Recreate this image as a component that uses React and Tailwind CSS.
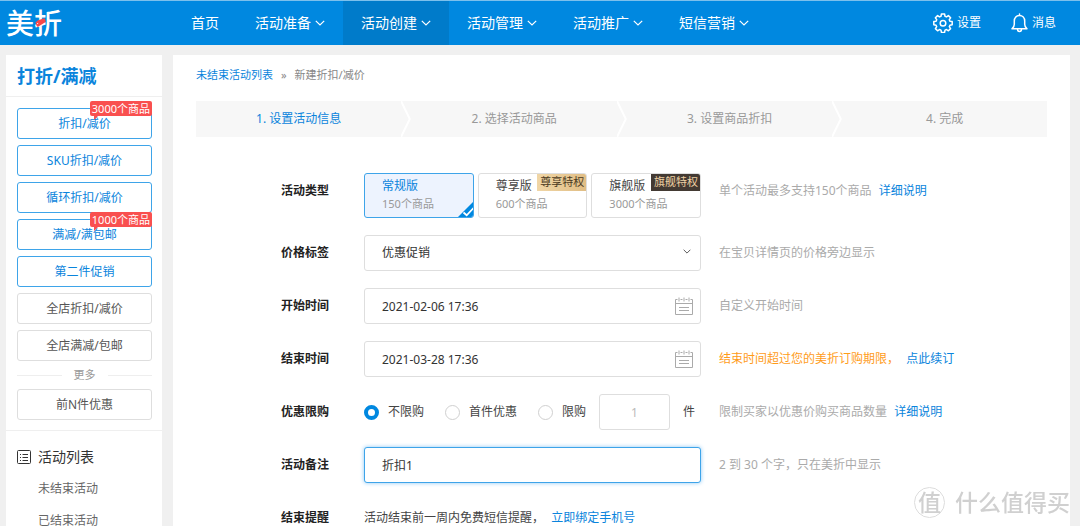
import { useState } from "react";
import clsx from "clsx";

const NAV = [
  { label: "首页" },
  { label: "活动准备", menu: true },
  { label: "活动创建", menu: true, active: true },
  { label: "活动管理", menu: true },
  { label: "活动推广", menu: true },
  { label: "短信营销", menu: true },
];

const TOOLS = [
  { label: "折扣/减价", primary: true, badge: "3000个商品" },
  { label: "SKU折扣/减价", primary: true },
  { label: "循环折扣/减价", primary: true },
  { label: "满减/满包邮", primary: true, badge: "1000个商品" },
  { label: "第二件促销", primary: true },
  { label: "全店折扣/减价" },
  { label: "全店满减/包邮" },
];

const STEPS = ["1. 设置活动信息", "2. 选择活动商品", "3. 设置商品折扣", "4. 完成"];

const EDITIONS = [
  { id: "basic", name: "常规版", quota: "150个商品" },
  { id: "premium", name: "尊享版", quota: "600个商品", tag: "尊享特权", tagClass: "bg-linear-to-r from-[#f0d6a6] to-[#e0bd84] text-[#4a3a22]" },
  { id: "flagship", name: "旗舰版", quota: "3000个商品", tag: "旗舰特权", tagClass: "bg-[#433a33] text-[#f0d2a4]" },
];

const LIMITS = [
  { id: "none", name: "不限购" },
  { id: "first", name: "首件优惠" },
  { id: "custom", name: "限购" },
];

const FIELD = "w-full h-9 rounded-[3px] border border-[#dedede] bg-white pl-[17px] text-[#333] outline-none";

function Chevron({ className }) {
  return (
    <svg className={className} viewBox="0 0 10 6" fill="none" stroke="currentColor" strokeWidth="1.2">
      <path d="M0.8 0.8L5 5l4.200-4.200" />
    </svg>
  );
}

function GearIcon() {
  return (
    <svg className="size-5" viewBox="0 0 20 20" fill="none" stroke="currentColor" strokeWidth="1.5" strokeLinejoin="round">
      <path d="M8.400 1h3.200l.4 2.300 1.500.6 1.900-1.300 2.200 2.200-1.300 1.900.6 1.500 2.300.4v3.200l-2.300.4-.6 1.500 1.300 1.900-2.200 2.200-1.900-1.300-1.500.6-.4 2.300H8.400L8 17.100l-1.500-.6-1.900 1.300-2.200-2.200 1.300-1.900-.6-1.500L.8 11.800V8.600l2.300-.4.6-1.500-1.300-1.900 2.200-2.200 1.900 1.300L8 3.300z" />
      <circle cx="10" cy="10.200" r="2.800" />
    </svg>
  );
}

function BellIcon() {
  return (
    <svg className="w-[17px] h-5" viewBox="0 0 17 20" fill="none" stroke="currentColor" strokeWidth="1.5" strokeLinejoin="round" strokeLinecap="round">
      <path d="M8.500 1v1.500M1 15.800h15c-1.600-1.300-2.300-2.600-2.300-4.600V8c0-3.200-2.200-5.500-5.200-5.500S3.300 4.800 3.300 8v3.200c0 2-.7 3.300-2.300 4.600z" />
      <path d="M6.500 16.200a2 2.200 0 0 0 4 0" />
    </svg>
  );
}

function CalendarIcon() {
  return (
    <svg className="size-[18px]" viewBox="0 0 18 18" fill="none" stroke="currentColor">
      <path d="M2.500 2.500h-2v15h17v-15h-2M5.500 2.500h2M10.500 2.500h2M.5 6.500h17M4 10.500h10M4 13.500h10" />
      <path d="M4 .5v4M9 .5v4M14 .5v4" />
    </svg>
  );
}

function ListIcon() {
  return (
    <svg className="size-[14px]" viewBox="0 0 14 14" fill="none" stroke="currentColor">
      <rect x=".5" y=".5" width="13" height="13" rx="1" />
      <path d="M3 4.500h1M3 7.500h1M3 10.500h1M5.500 4.500H11M5.500 7.500H11M5.500 10.500H11" />
    </svg>
  );
}

function Link({ children, className }) {
  return (
    <a href="#" className={clsx("text-[#0a84dc]", className)}>
      {children}
    </a>
  );
}

function Header() {
  return (
    <header className="flex h-[45px] items-stretch border-t border-[#7cc0ec] bg-[#0088e0] text-white">
      <a href="#" className="relative flex w-[173px] items-center pl-[6px] text-[28px] leading-none font-medium">
        美折
        <svg className="absolute top-[17px] left-[35px] h-[10px] w-[11px]" viewBox="0 0 11 10">
          <path d="M.5 4.500L3 2.200 8.500.4a1.300 1.300 0 0 1 1.600.8l.5 1.700a1.300 1.300 0 0 1-.8 1.600L3.500 8.600a1.400 1.400 0 0 1-1.900-.8z" fill="#f9484a" />
          <circle cx="2.600" cy="5.500" r=".6" fill="#fff" />
        </svg>
      </a>
      <nav className="flex text-sm">
        {NAV.map((item) => (
          <a key={item.label} href="#" className={clsx("flex items-center gap-1 px-[18px]", item.active && "bg-[#007bca]")}>
            {item.label}
            {item.menu && <Chevron className="h-[6px] w-[10px]" />}
          </a>
        ))}
      </nav>
      <div className="ml-auto flex items-center gap-[30px] pr-6 text-xs">
        <a href="#" className="flex items-center gap-1">
          <GearIcon />
          设置
        </a>
        <a href="#" className="flex items-center gap-1">
          <BellIcon />
          消息
        </a>
      </div>
    </header>
  );
}

function ToolButton({ tool }) {
  return (
    <button
      type="button"
      className={clsx(
        "relative h-[31px] w-full rounded-[3px] border bg-white",
        tool.primary ? "border-[#3ea4e9] text-[#0a84dc]" : "border-[#dedede] text-[#555]"
      )}
    >
      {tool.label}
      {tool.badge && (
        <span className="absolute -top-2 -right-px h-[15px] rounded-[2px] bg-[#f9504f] px-[2px] text-[11px] leading-[15px] text-white">
          {tool.badge}
          <svg className="absolute top-full left-1 h-1 w-1" viewBox="0 0 4 4">
            <path d="M0 0h4L0 4z" fill="#f9504f" />
          </svg>
        </span>
      )}
    </button>
  );
}

function Sidebar() {
  return (
    <aside className="w-[156px] shrink-0 bg-white">
      <h2 className="border-b border-[#efefef] px-[11px] pt-[7px] pb-[6px] text-lg leading-7 font-bold text-[#0a84dc]">打折/满减</h2>
      <div className="flex flex-col gap-[6px] border-b border-[#efefef] pt-[11px] pr-[10px] pb-[10px] pl-[11px]">
        {TOOLS.map((tool) => (
          <ToolButton key={tool.label} tool={tool} />
        ))}
        <div className="flex h-4 items-center gap-3 text-[11px] text-[#999]">
          <span className="h-px flex-1 bg-[#eee]" />
          更多
          <span className="h-px flex-1 bg-[#eee]" />
        </div>
        <ToolButton tool={{ label: "前N件优惠" }} />
      </div>
      <div className="px-[11px] pt-[14px] text-[#666]">
        <h3 className="flex items-center gap-[7px] text-sm leading-6 text-[#333]">
          <ListIcon />
          活动列表
        </h3>
        <ul className="pt-1 pl-[21px] leading-8">
          <li>
            <a href="#">未结束活动</a>
          </li>
          <li>
            <a href="#">已结束活动</a>
          </li>
        </ul>
      </div>
    </aside>
  );
}

function Steps() {
  return (
    <ol className="flex h-9 bg-[#f7f7f7] text-[#999]">
      {STEPS.map((step, i) => (
        <li key={step} className={clsx("flex items-stretch", i < STEPS.length - 1 ? "flex-1" : "flex-[0.95]")}>
          <span className={clsx("flex flex-1 items-center justify-center", i === 0 && "text-[#0a84dc]")}>{step}</span>
          {i < STEPS.length - 1 && (
            <svg className="h-9 w-[10px]" viewBox="0 0 10 36" fill="none" stroke="#fff" strokeWidth="2">
              <path d="M-.5-1L8.800 18-.5 37" />
            </svg>
          )}
        </li>
      ))}
    </ol>
  );
}

function Row({ label, htmlFor, hint, children }) {
  return (
    <div className="flex items-start">
      <label htmlFor={htmlFor} className="w-[133px] shrink-0 text-right leading-9 font-bold text-[#222]">
        {label}
      </label>
      <div className="ml-[35px] w-[337px] shrink-0">{children}</div>
      <div className="ml-[18px] leading-9 text-[#aaa]">{hint}</div>
    </div>
  );
}

function DateField({ id, defaultValue }) {
  return (
    <div className="relative">
      <input id={id} type="text" defaultValue={defaultValue} className={FIELD} />
      <span className="pointer-events-none absolute top-[9px] right-2 text-[#aaa]">
        <CalendarIcon />
      </span>
    </div>
  );
}

export default function App() {
  const [edition, setEdition] = useState("basic");
  const [limit, setLimit] = useState("none");

  return (
    <div className="relative min-h-screen bg-[#f0f0f0] font-['Noto_Sans','Noto_Sans_CJK_SC',sans-serif] text-xs text-[#444]">
      <Header />
      <div className="flex gap-[11px] pt-[10px] pr-[10px] pl-[6px]">
        <Sidebar />
        <main className="min-w-0 flex-1 bg-white px-[23px]">
          <div className="flex gap-2 pt-3 pb-[18px] text-[11px] leading-4 text-[#888]">
            <Link>未结束活动列表</Link>
            <span>»</span>
            <span>新建折扣/减价</span>
          </div>
          <Steps />
          <form className="flex flex-col gap-[17px] pt-9" onSubmit={(e) => e.preventDefault()}>
            <Row
              label="活动类型"
              htmlFor="edition-basic"
              hint={
                <>
                  单个活动最多支持150个商品 <Link className="ml-1">详细说明</Link>
                </>
              }
            >
              <div className="flex gap-1">
                {EDITIONS.map((item) => {
                  const checked = edition === item.id;
                  return (
                    <label
                      key={item.id}
                      htmlFor={`edition-${item.id}`}
                      className={clsx(
                        "relative h-[45px] flex-1 overflow-hidden rounded-[3px] border pt-[3px] pl-[17px] leading-[18px]",
                        checked ? "border-[#3ea4e9] bg-[#edf3fe]" : "border-[#dedede]"
                      )}
                    >
                      <input
                        id={`edition-${item.id}`}
                        type="radio"
                        name="edition"
                        className="sr-only"
                        checked={checked}
                        onChange={() => setEdition(item.id)}
                      />
                      <span className={clsx("block", checked && "text-[#0a84dc]")}>{item.name}</span>
                      <span className="block text-[11px] text-[#999]">{item.quota}</span>
                      {item.tag && (
                        <span className={clsx("absolute -top-px -right-px px-[3px] text-[11px]", item.tagClass)}>{item.tag}</span>
                      )}
                      {checked && (
                        <svg className="absolute -right-px -bottom-px size-[17px]" viewBox="0 0 17 17">
                          <path d="M17 0v17H0z" fill="#0088e0" />
                          <path d="M6.500 11.500l3.200 2.800L16.500 7" fill="none" stroke="#fff" strokeWidth="1.800" />
                        </svg>
                      )}
                    </label>
                  );
                })}
              </div>
            </Row>
            <Row label="价格标签" htmlFor="price-tag" hint="在宝贝详情页的价格旁边显示">
              <div className="relative">
                <select id="price-tag" className={clsx(FIELD, "appearance-none")}>
                  <option>优惠促销</option>
                </select>
                <Chevron className="pointer-events-none absolute top-[14px] right-[10px] h-[5px] w-2 text-[#555]" />
              </div>
            </Row>
            <Row label="开始时间" htmlFor="start-time" hint="自定义开始时间">
              <DateField id="start-time" defaultValue="2021-02-06 17:36" />
            </Row>
            <Row
              label="结束时间"
              htmlFor="end-time"
              hint={
                <>
                  <span className="text-[#ff9c1a]">结束时间超过您的美折订购期限，</span> <Link className="ml-1">点此续订</Link>
                </>
              }
            >
              <DateField id="end-time" defaultValue="2021-03-28 17:36" />
            </Row>
            <Row
              label="优惠限购"
              htmlFor="limit-none"
              hint={
                <>
                  限制买家以优惠价购买商品数量 <Link className="ml-1">详细说明</Link>
                </>
              }
            >
              <div className="flex items-center gap-[13px]">
                <div className="flex gap-[21px]">
                  {LIMITS.map((item) => (
                    <label key={item.id} htmlFor={`limit-${item.id}`} className="flex items-center gap-[9px]">
                      <input
                        id={`limit-${item.id}`}
                        type="radio"
                        name="limit"
                        className="size-[15px] appearance-none rounded-full border border-[#d0d0d0] bg-white checked:border-4 checked:border-[#0088e0]"
                        checked={limit === item.id}
                        onChange={() => setLimit(item.id)}
                      />
                      {item.name}
                    </label>
                  ))}
                </div>
                <input
                  type="text"
                  aria-label="限购"
                  defaultValue="1"
                  disabled={limit !== "custom"}
                  className="h-9 w-[71px] rounded-[3px] border border-[#dedede] bg-white text-center disabled:text-[#bbb]"
                />
                <span>件</span>
              </div>
            </Row>
            <Row label="活动备注" htmlFor="remark" hint="2 到 30 个字，只在美折中显示">
              <input
                id="remark"
                type="text"
                defaultValue="折扣1"
                className="h-9 w-full rounded-[3px] border border-[#3ea4e9] bg-white pl-[17px] text-[#333] shadow-[0_0_4px_#8cc8f4] outline-none"
              />
            </Row>
            <Row label="结束提醒" htmlFor="bind-phone">
              <p className="leading-9">
                活动结束前一周内免费短信提醒，{" "}
                <a id="bind-phone" href="#" className="ml-1 text-[#0a84dc]">
                  立即绑定手机号
                </a>
              </p>
            </Row>
          </form>
        </main>
      </div>
      <div className="pointer-events-none fixed right-[10px] bottom-2 flex items-center gap-[10px] text-[#d0d0d0]">
        <span className="flex size-[31px] items-center justify-center rounded-full border border-[#dcdcdc] text-[23px] leading-none font-medium">值</span>
        <span className="text-[23px] leading-8 font-medium">什么值得买</span>
      </div>
    </div>
  );
}
